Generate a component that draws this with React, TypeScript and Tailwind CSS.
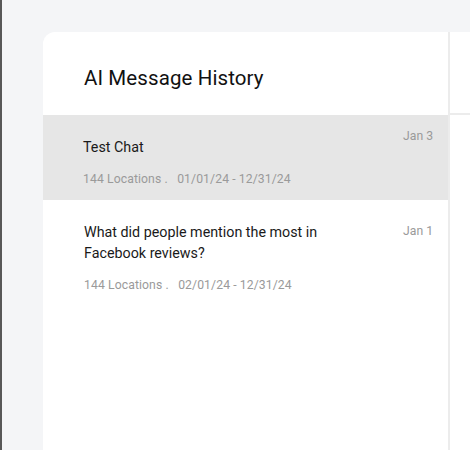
import React from 'react';

type ChatItem = {
	id: string;
	title: string;
	locations: number;
	range: string;
	date: string;
	active?: boolean;
};

const CHATS: ChatItem[] = [
	{ id: 'c1', title: 'Test Chat', locations: 144, range: '01/01/24 - 12/31/24', date: 'Jan 3', active: true },
	{
		id: 'c2',
		title: 'What did people mention the most in Facebook reviews?',
		locations: 144,
		range: '02/01/24 - 12/31/24',
		date: 'Jan 1',
	},
];

const App: React.FC = () => {
	return (
		<div
			className="flex h-[450px] w-[470px] overflow-hidden bg-[#f4f5f7]"
			style={{ fontFamily: 'Roboto, "Liberation Sans", sans-serif' }}
		>
			<div className="w-[2px] shrink-0 bg-[#585858]" />
			<div className="flex flex-1 pl-[41px] pt-[32px]">
				<section
					aria-label="AI message history"
					className="flex w-[407px] shrink-0 flex-col overflow-hidden rounded-tl-xl border-r-2 border-[#ececec] bg-white"
				>
					<header className="flex h-[83px] shrink-0 items-center pl-[41px] pt-[10px]">
						<h1 className="text-[20.5px] font-normal tracking-[0.1px] text-[#111]">AI Message History</h1>
					</header>
					<ul className="flex flex-col">
						{CHATS.map((chat) => (
							<li
								key={chat.id}
								className={
									chat.active
										? 'flex h-[85px] items-start justify-between bg-[#e6e6e6] pl-[40px] pr-[15px] pt-[14px]'
										: 'flex items-start justify-between pl-[41px] pr-[15px] pt-[22px] pb-[13px]'
								}
							>
								<div className={chat.active ? 'flex max-w-[260px] flex-col pt-[8px]' : 'flex max-w-[260px] flex-col'}>
									<p className="text-[14.3px] leading-[21px] text-[#1a1a1a]">{chat.title}</p>
									<p className="mt-[12px] text-[12.2px] leading-[18px] tracking-[0.1px] text-[#9a9a9a]">
										{chat.locations} Locations .&nbsp;&nbsp; {chat.range}
									</p>
								</div>
								<span className={chat.active ? 'text-[12.2px] leading-[14px] text-[#9a9a9a]' : 'pt-[2px] text-[12.2px] leading-[14px] text-[#9a9a9a]'}>
									{chat.date}
								</span>
							</li>
						))}
					</ul>
				</section>
				<aside className="flex flex-1 flex-col bg-white">
					<div className="h-[83px] shrink-0 border-b-2 border-[#ececec]" />
				</aside>
			</div>
		</div>
	);
};

export default App;
